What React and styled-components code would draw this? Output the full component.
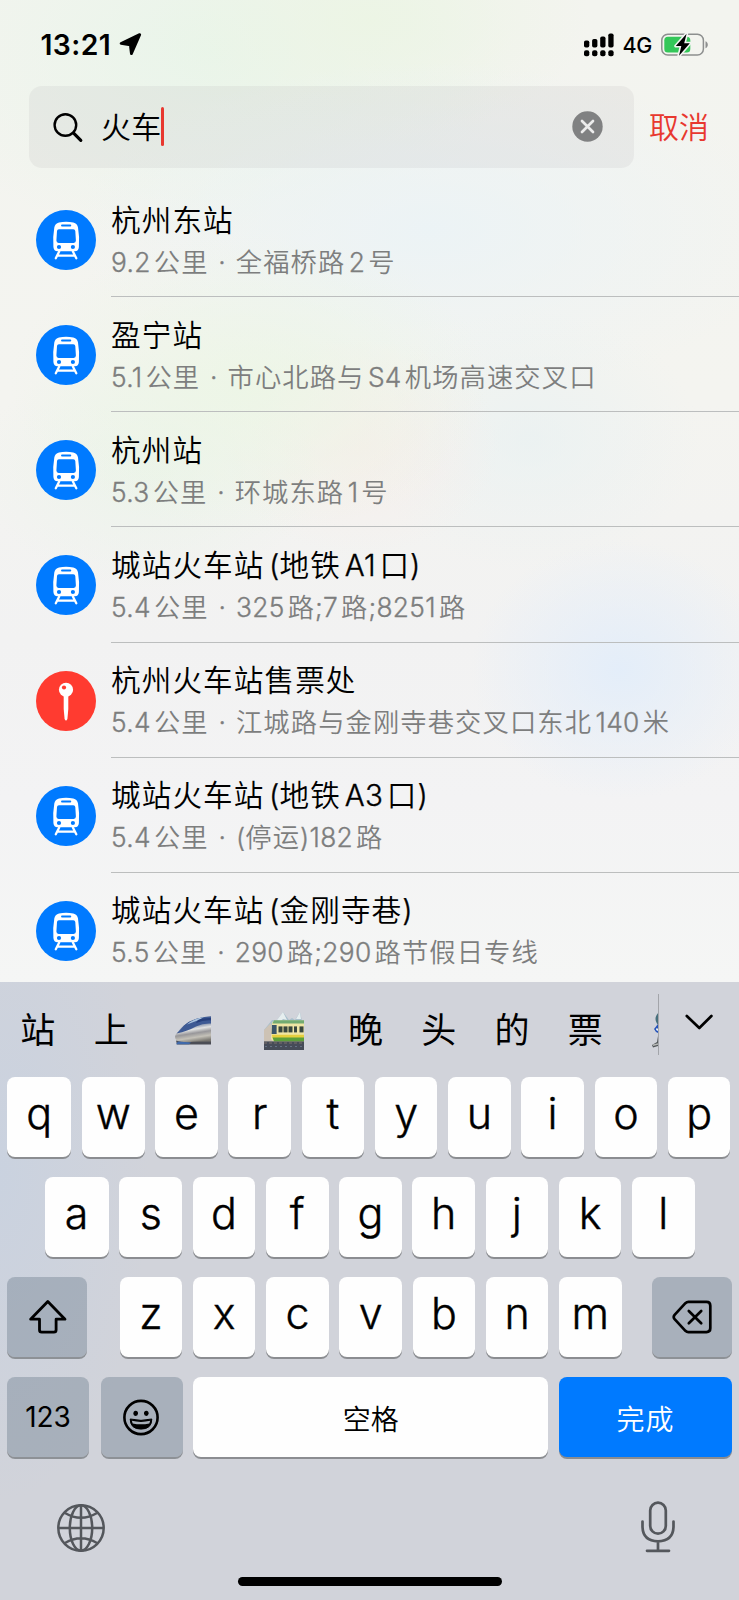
import React from "react";
import styled, { createGlobalStyle } from "styled-components";

const GlobalStyle = createGlobalStyle`
  * { box-sizing: border-box; }
  body {
    margin: 0;
    font-family: Inter, "Noto Sans CJK SC", sans-serif;
    color: #000;
  }
  button { font: inherit; color: inherit; border: 0; padding: 0; margin: 0; background: none; }
  svg { display: block; flex: none; }
`;

const Screen = styled.div`
  width: 739px;
  height: 1600px;
  overflow: hidden;
  display: flex;
  flex-direction: column;
  background:
    radial-gradient(ellipse 150px 130px at 620px 670px, rgba(226, 237, 250, 0.9), transparent),
    radial-gradient(ellipse 240px 150px at 250px 385px, rgba(235, 246, 228, 0.8), transparent),
    radial-gradient(ellipse 170px 120px at 150px 470px, rgba(231, 244, 230, 0.6), transparent),
    radial-gradient(ellipse 140px 110px at 360px 445px, rgba(247, 236, 232, 0.7), transparent),
    radial-gradient(ellipse 170px 130px at 530px 440px, rgba(232, 241, 242, 0.7), transparent),
    radial-gradient(ellipse 360px 170px at 430px 230px, rgba(235, 243, 246, 0.9), transparent),
    radial-gradient(ellipse 220px 120px at 370px 20px, rgba(236, 245, 228, 0.9), transparent),
    radial-gradient(ellipse 300px 200px at 210px 50px, rgba(232, 245, 233, 0.9), transparent),
    linear-gradient(180deg, #f3f4ef 0, #f4f4f0 400px, #f2f2f2 640px, #f3f3f4 800px, #f5f6f5 985px);
`;

const StatusBar = styled.header`
  height: 85.5px;
  flex: none;
  display: flex;
  align-items: center;
  justify-content: space-between;
  padding: 4px 30px 0 40.5px;
`;

const StatusGroup = styled.div`
  display: flex;
  align-items: center;
`;

const Clock = styled.span`
  font-size: 28.3px;
  font-weight: 600;
  line-height: 34px;
  letter-spacing: 0.4px;
  margin-right: 8px;
`;

const Network = styled.span`
  font-size: 21.5px;
  font-weight: 500;
  line-height: 26px;
  letter-spacing: -0.4px;
  margin: 0 9px 0 9px;
`;

const SearchRow = styled.div`
  height: 82.5px;
  flex: none;
  display: flex;
  align-items: stretch;
  padding-left: 29px;
`;

const SearchField = styled.div`
  width: 604.5px;
  border-radius: 13px;
  background: rgba(70, 60, 70, 0.055);
  display: flex;
  align-items: center;
  padding: 0 31px 0 23px;
`;

const Query = styled.span`
  font-size: 30px;
  line-height: 42px;
  letter-spacing: 0.2px;
  margin-left: 17px;
  font-weight: 350;
`;

const Caret = styled.i`
  width: 3.5px;
  height: 39px;
  border-radius: 2px;
  background: #e8382f;
  margin-left: -0.5px;
  margin-right: auto;
`;

const Cancel = styled.button`
  margin-left: 15.5px;
  font-size: 30px;
  line-height: 42px;
  font-weight: 350;
  color: #e8382f;
`;

const Results = styled.ul`
  list-style: none;
  margin: 0;
  padding: 14px 0 0;
  height: 814px;
  flex: none;
  overflow: hidden;
`;

const Row = styled.li`
  height: 115.15px;
  display: flex;
  align-items: stretch;
  padding-left: 36px;
`;

const Badge = styled.div`
  width: 60px;
  height: 60px;
  margin: 28px 15px 0 0;
  flex: none;
  border-radius: 50%;
  background: ${(p) => (p.$tone === "red" ? "#ff3b30" : "#007aff")};
`;

const RowText = styled.div`
  flex: 1;
  padding-top: 16.5px;
  border-bottom: 1px solid ${(p) => (p.$last ? "transparent" : "#bcbebe")};
  white-space: pre;
`;

const Title = styled.div`
  font-size: 29.6px;
  line-height: 42px;
  letter-spacing: 1.1px;
  word-spacing: -4px;
  font-weight: 350;
`;

const Subtitle = styled.div`
  font-size: 26.3px;
  line-height: 44px;
  letter-spacing: 1.1px;
  word-spacing: 2.2px;
  font-weight: 350;
  color: #7d7e7e;
`;

const Latin = styled.span`
  letter-spacing: ${(p) => (p.$num ? "0.35px" : "0.2px")};
  -webkit-text-stroke: 0.35px currentColor;
  margin-left: ${(p) => (p.$before ? "0.13em" : "0")};
  margin-right: ${(p) => (p.$after ? "0.115em" : "0")};
`;

const Keyboard = styled.section`
  flex: 1;
  display: flex;
  flex-direction: column;
  background:
    radial-gradient(ellipse 150px 330px at 0 190px, rgba(201, 210, 224, 0.9), transparent),
    #d1d3da;
`;

const Candidates = styled.div`
  height: 94.5px;
  flex: none;
  display: flex;
  align-items: stretch;
`;

const CandidateStrip = styled.div`
  width: 658px;
  flex: none;
  overflow: hidden;
  display: flex;
  align-items: center;
  font-size: 35px;
  line-height: 48px;
  padding-top: 2px;
`;

const Candidate = styled.span`
  width: ${(p) => p.$w || 73.2}px;
  flex: none;
  display: flex;
  justify-content: center;
`;

const Separator = styled.i`
  width: 1px;
  height: 61px;
  margin-top: 11.5px;
  background: #a3a5aa;
`;

const Collapse = styled.button`
  margin: 31px 0 0 25px;
  align-self: flex-start;
`;

const KeyRow = styled.div`
  height: 100px;
  flex: none;
  display: flex;
  align-items: flex-start;
  gap: 10.65px;
  padding: 0 7px 0 ${(p) => p.$indent || 7}px;
`;

const Key = styled.button`
  width: ${(p) => p.$w || 62.6}px;
  height: 80px;
  flex: none;
  border-radius: 8px;
  display: flex;
  align-items: center;
  justify-content: center;
  padding-bottom: ${(p) => (p.$letter ? 7 : 0)}px;
  margin-left: ${(p) => p.$ml || 0}px;
  font-size: ${(p) => (p.$letter ? 43 : 28)}px;
  font-weight: ${(p) => (p.$letter ? 340 : 400)};
  -webkit-text-stroke: ${(p) => (p.$letter ? "0.4px #000" : "0")};
  color: ${(p) => (p.$tone === "blue" ? "#fff" : "#000")};
  background: ${(p) =>
    p.$tone === "blue" ? "#007aff" : p.$tone === "gray" ? "rgba(123, 138, 153, 0.48)" : "#fefefe"};
  box-shadow: 0 2px 0 ${(p) => (p.$tone === "gray" ? "#8d9196" : "#8b8d91")};
`;

const KeyLabel = styled.span`
  font-size: ${(p) => p.$size}px;
  line-height: 40px;
  letter-spacing: ${(p) => p.$track || 0}px;
  padding-top: ${(p) => (p.$han ? 7 : 0)}px;
  font-weight: ${(p) => (p.$han ? 350 : 400)};
`;

const Dock = styled.div`
  flex: 1;
  display: flex;
  justify-content: space-between;
  padding: 24.5px 64px 0 57px;
`;

const DockButton = styled.button`
  align-self: flex-start;
  padding-top: ${(p) => p.$drop || 0}px;
`;

const HomeArea = styled.div`
  height: 23.5px;
  flex: none;
  display: flex;
  justify-content: center;
`;

const HomeIndicator = styled.i`
  width: 264px;
  height: 9px;
  border-radius: 5px;
  background: #000;
`;

const LocationArrow = () => (
  <svg width="23" height="23" viewBox="0 0 23 23">
    <path d="M20.7 1.6 L12.4 20.6 L11.3 11.9 L2.1 10.4 Z" fill="#000" stroke="#000" strokeWidth="2.8" strokeLinejoin="round" />
  </svg>
);

const Signal = () => (
  <svg width="30" height="24" viewBox="0 0 30 24">
    {[[0, 7.5], [8.1, 6], [16.2, 3.5], [24.3, 0.5]].map(([x, y]) => (
      <g key={x}>
        <rect x={x} y={y} width="5.3" height={14.5 - y} rx="1.8" />
        <rect x={x} y="17.3" width="5.3" height="6" rx="2" />
      </g>
    ))}
  </svg>
);

const Battery = () => (
  <svg width="48" height="24" viewBox="0 0 48 24">
    <rect x="0.8" y="1.3" width="41.6" height="20.8" rx="6" fill="none" stroke="#8d8f8f" strokeWidth="1.5" />
    <path d="M44.5 8.2 C47.6 9.4 47.6 14 44.5 15.2 Z" fill="#8d8f8f" />
    <rect x="3.3" y="3.8" width="26" height="15.8" rx="3.5" fill="#34c759" />
    <path d="M25.6 0.8 L14.8 13 H20.3 L18 22.7 L28.8 10.3 H23.2 Z" fill="#000" stroke="#f3f4f2" strokeWidth="3.2" strokeLinejoin="round" paintOrder="stroke" />
  </svg>
);

const SearchIcon = () => (
  <svg width="32" height="32" viewBox="0 0 32 32" fill="none" stroke="#000" strokeLinecap="round">
    <circle cx="13.4" cy="14" r="10.8" strokeWidth="2.4" />
    <path d="M21.6 22.2 L28.8 29.3" strokeWidth="3.2" />
  </svg>
);

const ClearIcon = () => (
  <svg width="31" height="31" viewBox="0 0 31 31">
    <circle cx="15.5" cy="15.5" r="15.2" fill="#808182" />
    <path d="M10 10 L21 21 M21 10 L10 21" stroke="#ececec" strokeWidth="2.7" strokeLinecap="round" />
  </svg>
);

const TrainIcon = () => (
  <svg width="60" height="60" viewBox="0 0 60 60">
    <path
      fill="#fff"
      fillRule="evenodd"
      d="M23 12.4 Q30 11 37.3 12.4 Q41.4 13.4 42 17.5 Q43.6 26 42.9 37 Q42.6 41.2 38.8 41.2 H21.5 Q17.8 41.2 17.4 37 Q16.7 26 18.3 17.5 Q19 13.4 23 12.4 Z
      M26 14.6 A.9 .9 0 0 0 26 16.5 H34.3 A.9 .9 0 0 0 34.3 14.6 Z
      M22.9 19.2 Q21.2 19.2 21 21 L20.4 30.6 Q20.4 32.9 22.6 32.9 H37.7 Q39.9 32.9 39.9 30.6 L39.3 21 Q39.1 19.2 37.3 19.2 Z
      M23 34.9 A2.1 2.1 0 1 0 23 39.1 A2.1 2.1 0 1 0 23 34.9 Z
      M36.9 34.9 A2.1 2.1 0 1 0 36.9 39.1 A2.1 2.1 0 1 0 36.9 34.9 Z"
    />
    <path d="M23.2 41.4 L19.8 48.2 M36.9 41.4 L40.3 48.2 M21.5 45.7 H38.7" stroke="#fff" strokeWidth="2.3" fill="none" strokeLinecap="round" />
  </svg>
);

const PinIcon = () => (
  <svg width="60" height="60" viewBox="0 0 60 60">
    <circle cx="30" cy="18.8" r="7.1" fill="#fff" />
    <circle cx="28" cy="16.5" r="2.1" fill="#ff3b30" />
    <path d="M27.7 25 H32.3 V38 L31.4 48 Q30 51 28.6 48 L27.7 38 Z" fill="#fff" />
  </svg>
);

const BulletTrain = () => (
  <svg width="38" height="29" viewBox="0 0 38 29">
    <defs>
      <linearGradient id="nose" x1="0.4" y1="0.1" x2="0.6" y2="1">
        <stop offset="0.2" stopColor="#55688f" />
        <stop offset="0.45" stopColor="#e2e3e2" />
        <stop offset="0.62" stopColor="#98979a" />
        <stop offset="0.8" stopColor="#c4c1b8" />
        <stop offset="1" stopColor="#77756f" />
      </linearGradient>
    </defs>
    <path d="M37 0.5 Q20 0.8 10 9.5 Q1 17 1 21 Q1 26 10 26 H37 Z" fill="url(#nose)" />
    <path d="M37 0.5 Q20 0.8 10 9.5 L2.5 17.5 Q14 15 22 10.5 Q29 7 37 7.5 Z" fill="#3e5a94" />
    <path d="M30 1 Q20 2.4 13 8.4 Q20 5.6 25 4 Z" fill="#a9c3de" />
    <path d="M24 4 Q28 1.8 37 2 V4.4 Q29 4 22 7 Z" fill="#27407c" />
    <path d="M2 24.5 Q9 27 20 25.7 L37 25.5 V28.5 H3 Z" fill="#4b4d55" />
    <path d="M4 25.5 L17 26.5 L15 28.3 H2 Z" fill="#3f69ab" />
  </svg>
);

const MountainRailway = () => (
  <svg width="40" height="39" viewBox="0 0 40 39">
    <path d="M0 19 L8 9 L13 9 L19 1 L25 9 L28 7 L31 9 L36 1 L38 10 V30 H0 Z" fill="#a9c0cc" />
    <path d="M13 9 L19 1 L23 9 L19 8 L16 11 Z M32 8 L36 1 L37 8 Z" fill="#e6eeef" />
    <path d="M0 19 L7 12 L10 31 H0 Z" fill="#cdc2b4" />
    <path d="M8 12 Q9 9.5 11 9.5 H40 V31 H10 L7 28 Z" fill="#efe5a4" />
    <path d="M10 9.3 H40 V12.6 H8.4 Z" fill="#72ab72" />
    <path d="M8 14 H12.6 V23 H7.6 Z" fill="#3b5568" />
    {[14.5, 19.5, 24.5, 30, 35.5].map((x) => (
      <rect key={x} x={x} y="15.4" width={x === 30 ? 3 : 4} height="6" fill="#38473e" />
    ))}
    <path d="M8 23.8 H40 V27 H8.5 Z" fill="#e5cf3d" />
    <path d="M8.5 26.6 H40 V30.4 H10 Z" fill="#5da03a" />
    <rect x="0" y="30.4" width="40" height="8.6" fill="#464c58" />
    <path d="M0 32 H40" stroke="#7c716c" strokeWidth="1.2" strokeDasharray="3 2" />
    <path d="M1 35.5 H40" stroke="#667286" strokeWidth="1.2" strokeDasharray="2 3" />
  </svg>
);

const Runner = () => (
  <svg width="38" height="38" viewBox="0 0 38 38">
    <ellipse cx="8.5" cy="8" rx="5" ry="6.5" fill="#47707c" />
    <path d="M2 18 L6 13 L14 16 V24 L8 23 L4 21 Z" fill="#2553ba" />
    <path d="M4.5 17 L8 19 V21 L4 19 Z" fill="#f0f4fa" />
    <path d="M6 25 L12 23 V30 L6 35 L1 36.5 L0 34 L5 31 Z" fill="#525759" />
    <path d="M1 34.3 L6 33" stroke="#b8bab8" strokeWidth="1.4" />
  </svg>
);

const ChevronDown = () => (
  <svg width="30" height="18" viewBox="0 0 30 18" fill="none" stroke="#000" strokeWidth="2.7" strokeLinecap="round" strokeLinejoin="round">
    <path d="M2.8 3 L15.3 15 L27.4 3" />
  </svg>
);

const ShiftIcon = () => (
  <svg width="40" height="36" viewBox="0 0 40 36" fill="none" stroke="#000" strokeWidth="2.8" strokeLinejoin="round">
    <path d="M20.8 2.6 L38 20.2 H29.1 V31 Q29.1 33.2 26.9 33.2 H14.7 Q12.5 33.2 12.5 31 V20.2 H3.6 Z" />
  </svg>
);

const DeleteIcon = () => (
  <svg width="40" height="34" viewBox="0 0 40 34" fill="none" stroke="#000" strokeWidth="2.7" strokeLinecap="round" strokeLinejoin="round">
    <path d="M16.4 1.9 H34.5 Q38.3 1.9 38.3 5.7 V28.3 Q38.3 32.1 34.5 32.1 H16.4 Q14.8 32.1 13.4 30.8 L2.6 19.2 Q0.8 17 2.6 14.8 L13.4 3.2 Q14.8 1.9 16.4 1.9 Z" />
    <path d="M16.8 11 L29.2 23.2 M29.2 11 L16.8 23.2" />
  </svg>
);

const SmileIcon = () => (
  <svg width="38" height="38" viewBox="0 0 38 38">
    <circle cx="18" cy="19.5" r="16.6" fill="none" stroke="#000" strokeWidth="2.6" />
    <ellipse cx="12.7" cy="15.3" rx="2.3" ry="2.6" />
    <ellipse cx="23.3" cy="15.3" rx="2.3" ry="2.6" />
    <path d="M7.2 21 Q18 23.7 28.8 21 Q28.8 31.1 18 31.1 Q7.2 31.1 7.2 21 Z" stroke="#000" strokeWidth="1" strokeLinejoin="round" />
    <path d="M8.8 22.8 Q18 25 27.2 22.8 L26.3 25.4 Q18 27.2 9.7 25.4 Z" fill="#a8b0b9" />
  </svg>
);

const GlobeIcon = () => (
  <svg width="48" height="48" viewBox="0 0 48 48" fill="none" stroke="#54575c" strokeWidth="2.5">
    <circle cx="24" cy="24" r="22.7" />
    <ellipse cx="24" cy="24" rx="11.2" ry="22.7" />
    <path d="M24 1.3 V46.7 M1.3 24 H46.7 M8 9 Q24 18.5 40 9 M8 39 Q24 29.5 40 39" />
  </svg>
);

const MicIcon = () => (
  <svg width="34" height="52" viewBox="0 0 34 52" fill="none" stroke="#54575c" strokeWidth="2.7" strokeLinecap="round">
    <rect x="9.2" y="1.7" width="15.6" height="31" rx="7.8" />
    <path d="M1.5 20.5 V26 Q2 40 17 40.3 Q32 40 32.5 26 V20.5 M17 40.3 V49.5 M6 49.8 H28" />
  </svg>
);

const isHan = (s) => !!s && /[\u4e00-\u9fff]/.test(s);

// Adds a narrow gap wherever a Latin run touches Han characters.
const MixedText = ({ children }) => {
  const runs = children.match(/[\u4e00-\u9fff]+|[A-Za-z0-9.]+|[^\u4e00-\u9fffA-Za-z0-9.]+/g);
  return runs.map((run, i) =>
    isHan(run) ? (
      run
    ) : (
      <Latin
        key={i}
        $num={/\w/.test(run)}
        $before={/\w/.test(run) && isHan(runs[i - 1])}
        $after={/\w/.test(run) && isHan(runs[i + 1])}
      >
        {run}
      </Latin>
    )
  );
};

const places = [
  { title: "杭州东站", sub: "9.2公里 · 全福桥路2号" },
  { title: "盈宁站", sub: "5.1公里 · 市心北路与S4机场高速交叉口" },
  { title: "杭州站", sub: "5.3公里 · 环城东路1号" },
  { title: "城站火车站 (地铁A1口)", sub: "5.4公里 · 325路;7路;8251路" },
  { title: "杭州火车站售票处", sub: "5.4公里 · 江城路与金刚寺巷交叉口东北140米", pin: true },
  { title: "城站火车站 (地铁A3口)", sub: "5.4公里 · (停运)182路" },
  { title: "城站火车站 (金刚寺巷)", sub: "5.5公里 · 290路;290路节假日专线" },
];

const Letters = ({ letters, wideFirst }) =>
  letters.split("").map((c, i) => (
    <Key key={c} $letter $w={wideFirst && i === 0 ? 64.3 : 0}>
      {c}
    </Key>
  ));

export default function App() {
  return (
    <>
      <GlobalStyle />
      <Screen>
        <StatusBar>
          <StatusGroup>
            <Clock>13:21</Clock>
            <LocationArrow />
          </StatusGroup>
          <StatusGroup>
            <Signal />
            <Network>4G</Network>
            <Battery />
          </StatusGroup>
        </StatusBar>
        <SearchRow>
          <SearchField>
            <SearchIcon />
            <Query>火车</Query>
            <Caret />
            <ClearIcon />
          </SearchField>
          <Cancel>取消</Cancel>
        </SearchRow>
        <Results>
          {places.map((p, i) => (
            <Row key={p.title}>
              <Badge $tone={p.pin ? "red" : "blue"}>{p.pin ? <PinIcon /> : <TrainIcon />}</Badge>
              <RowText $last={i === places.length - 1}>
                <Title>
                  <MixedText>{p.title}</MixedText>
                </Title>
                <Subtitle>
                  <MixedText>{p.sub}</MixedText>
                </Subtitle>
              </RowText>
            </Row>
          ))}
        </Results>
        <Keyboard>
          <Candidates>
            <CandidateStrip>
              <Candidate $w={75.5}>站</Candidate>
              <Candidate $w={71.5}>上</Candidate>
              <Candidate $w={92}>
                <BulletTrain />
              </Candidate>
              <Candidate $w={90}>
                <MountainRailway />
              </Candidate>
              <Candidate>晚</Candidate>
              <Candidate>头</Candidate>
              <Candidate>的</Candidate>
              <Candidate>票</Candidate>
              <Candidate $w={98}>
                <Runner />
              </Candidate>
            </CandidateStrip>
            <Separator />
            <Collapse>
              <ChevronDown />
            </Collapse>
          </Candidates>
          <KeyRow>
            <Letters letters="qwertyuiop" wideFirst />
          </KeyRow>
          <KeyRow $indent={44.5}>
            <Letters letters="asdfghjkl" wideFirst />
          </KeyRow>
          <KeyRow>
            <Key $w={80} $tone="gray">
              <ShiftIcon />
            </Key>
            <Key $letter $ml={22}>
              z
            </Key>
            <Letters letters="xcvbnm" />
            <Key $w={80} $tone="gray" $ml={20}>
              <DeleteIcon />
            </Key>
          </KeyRow>
          <KeyRow>
            <Key $w={82} $tone="gray">
              <KeyLabel $size={28} $track={-0.1}>123</KeyLabel>
            </Key>
            <Key $w={82} $tone="gray" $ml={1}>
              <SmileIcon />
            </Key>
            <Key $w={355}>
              <KeyLabel $size={28} $han>空格</KeyLabel>
            </Key>
            <Key $w={173} $tone="blue">
              <KeyLabel $size={28} $track={1} $han>完成</KeyLabel>
            </Key>
          </KeyRow>
          <Dock>
            <DockButton $drop={3}>
              <GlobeIcon />
            </DockButton>
            <DockButton>
              <MicIcon />
            </DockButton>
          </Dock>
          <HomeArea>
            <HomeIndicator />
          </HomeArea>
        </Keyboard>
      </Screen>
    </>
  );
}
